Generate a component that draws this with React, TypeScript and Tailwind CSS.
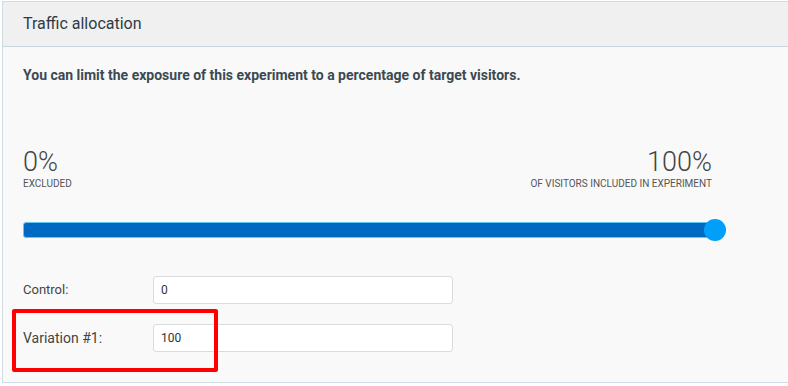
import React from "react";

export default function App() {
  return (
    <div
      className="relative w-[788px] h-[386px] overflow-hidden bg-white pl-[2px] pt-[1px]"
      style={{ fontFamily: "Roboto, 'Liberation Sans', sans-serif" }}
    >
      <div className="w-[820px] h-[382px] border border-[#cfdce1] bg-[#f9f9f9]">
        <div className="h-[45px] bg-[#f0f0f0] border-b border-[#c6d8dd] flex items-center px-[20px]">
          <span className="text-[16px] text-[#2d3b45]">Traffic allocation</span>
        </div>
        <div className="w-[730px] px-[20px] pt-[18px]">
          <p className="text-[14px] leading-[20px] font-bold text-[#3b4a52]">
            You can limit the exposure of this experiment to a percentage of target visitors.
          </p>
          <div className="mt-[65px] flex justify-between w-[689px]">
            <div className="flex flex-col">
              <span className="text-[27px] leading-[24px] font-light text-[#444]">0%</span>
              <span className="mt-[5px] text-[10px] leading-[10px] text-[#555] uppercase">Excluded</span>
            </div>
            <div className="flex flex-col items-end">
              <span className="text-[27px] leading-[24px] font-light text-[#444]">100%</span>
              <span className="mt-[5px] text-[10px] leading-[10px] text-[#555] uppercase">
                Of visitors included in experiment
              </span>
            </div>
          </div>
          <div className="relative mt-[33px] w-[692px] h-[16px]">
            <div className="h-[16px] rounded-[3px] bg-[#0069c2] border border-[#66c6f2]" />
            <div className="absolute right-[-11px] top-[-3px] w-[22px] h-[22px] rounded-full bg-[#00a0fa]" />
          </div>
          <div className="mt-[38px] flex flex-col gap-[20px]">
            <div className="flex items-center">
              <span className="w-[130px] text-[13px] text-[#444]">Control:</span>
              <div className="w-[300px] h-[28px] bg-white border border-[#d6dce0] rounded-[3px] flex items-center px-[7px] text-[12px] text-[#333]">
                0
              </div>
            </div>
            <div className="flex items-center">
              <span className="w-[130px] text-[14px] text-[#444]">Variation #1:</span>
              <div className="w-[300px] h-[28px] bg-white border border-[#d6dce0] rounded-[3px] flex items-center px-[7px] text-[12px] text-[#333]">
                100
              </div>
            </div>
          </div>
        </div>
      </div>
      <div className="absolute left-[12px] top-[309px] w-[206px] h-[63px] border-[4px] border-[#ff0000] rounded-[2px]" />
    </div>
  );
}
